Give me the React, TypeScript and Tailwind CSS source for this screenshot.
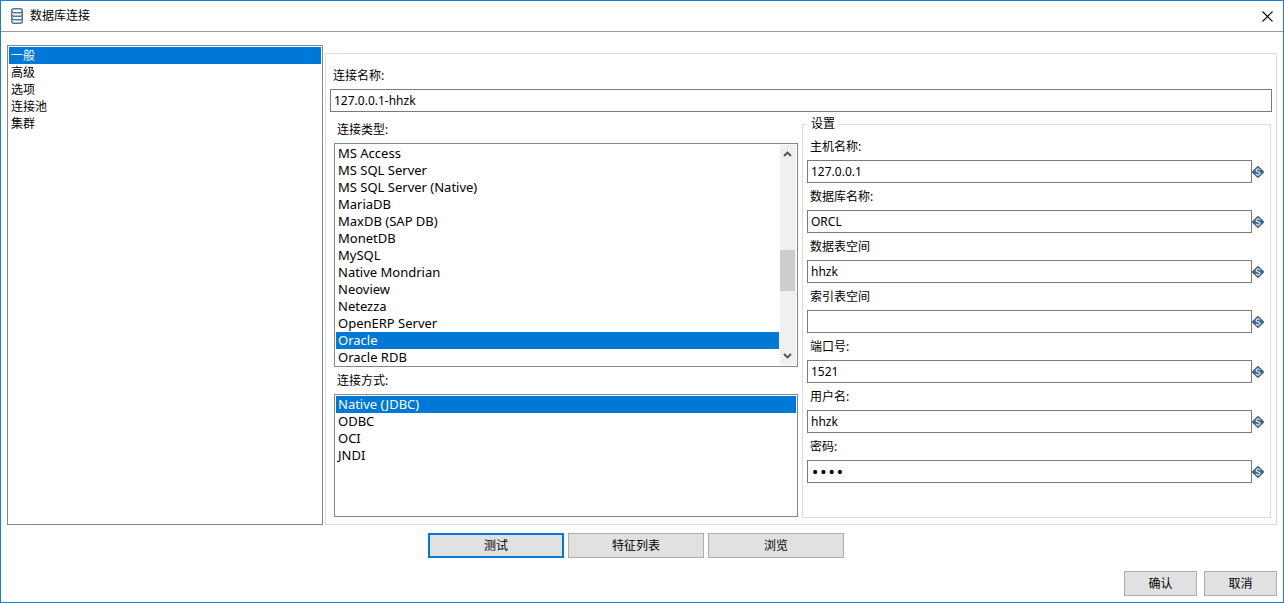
import { FC, ReactNode, useState } from "react";
import clsx from "clsx";

const sections = ["一般", "高级", "选项", "连接池", "集群"];

const connectionTypes = [
  "MS Access",
  "MS SQL Server",
  "MS SQL Server (Native)",
  "MariaDB",
  "MaxDB (SAP DB)",
  "MonetDB",
  "MySQL",
  "Native Mondrian",
  "Neoview",
  "Netezza",
  "OpenERP Server",
  "Oracle",
  "Oracle RDB",
];

const accessMethods = ["Native (JDBC)", "ODBC", "OCI", "JNDI"];

const settings = [
  { id: "host", label: "主机名称:", value: "127.0.0.1" },
  { id: "database", label: "数据库名称:", value: "ORCL" },
  { id: "data-tablespace", label: "数据表空间", value: "hhzk" },
  { id: "index-tablespace", label: "索引表空间", value: "" },
  { id: "port", label: "端口号:", value: "1521" },
  { id: "user", label: "用户名:", value: "hhzk" },
  { id: "password", label: "密码:", value: "hhzk", type: "password" },
];

const DatabaseIcon: FC = () => (
  <svg
    width="12"
    height="16"
    viewBox="0 0 12 16"
    fill="none"
    stroke="#55779a"
    strokeWidth="1.4"
    aria-hidden="true"
  >
    <rect x="0.7" y="0.7" width="10.6" height="4" rx="2" />
    <path d="M0.7 2.700v10.400c0 1.200.9 2.100 2.100 2.100h6.400c1.200 0 2.100-.9 2.100-2.100V2.700" />
    <path d="M0.7 6.200c0 1.200.9 2 2.100 2h6.400c1.200 0 2.100-.8 2.100-2M0.7 9.700c0 1.200.9 2 2.100 2h6.400c1.200 0 2.100-.8 2.100-2" />
  </svg>
);

const VariableIcon: FC = () => (
  <svg width="12" height="12" viewBox="0 0 12 12" className="shrink-0" aria-hidden="true">
    <path
      d="M5.100.4a1.300 1.300 0 0 1 1.800 0l4.700 4.700a1.300 1.300 0 0 1 0 1.800l-4.700 4.700a1.300 1.300 0 0 1-1.800 0L.4 6.900a1.300 1.300 0 0 1 0-1.800z"
      fill="#3f6685"
    />
    <path
      d="M8 4.200C7.600 3.400 6.900 3 6 3c-1.100 0-1.900.6-1.900 1.400C4.100 6.400 8 5.500 8 7.500c0 .9-.9 1.500-2 1.500-.9 0-1.700-.4-2.100-1.200"
      fill="none"
      stroke="#dbe7f0"
      strokeWidth="1.2"
    />
    <path d="M6 1.900v1.200M6 8.900v1.200" stroke="#dbe7f0" strokeWidth="1" />
  </svg>
);

interface ListBoxProps {
  label: string;
  items: string[];
  initial: string;
  className?: string;
  children?: ReactNode;
}

const ListBox: FC<ListBoxProps> = ({ label, items, initial, className, children }) => {
  const [selected, setSelected] = useState(initial);

  return (
    <div className={clsx("flex border border-[#828790] bg-white p-px", className)}>
      <ul role="listbox" aria-label={label} tabIndex={0} className="min-w-0 flex-1 outline-none">
        {items.map((item) => (
          <li
            key={item}
            role="option"
            aria-selected={item === selected}
            onClick={() => setSelected(item)}
            className={clsx(
              "h-[17px] cursor-default truncate px-0.5 leading-[17px]",
              item === selected && "bg-[#0078d7] text-white"
            )}
          >
            {item}
          </li>
        ))}
      </ul>
      {children}
    </div>
  );
};

const ScrollBar: FC = () => (
  <div className="ml-px flex w-4 flex-col items-center bg-[#f0f0f0]" aria-hidden="true">
    <svg width="16" height="17" viewBox="0 0 16 17" fill="none" stroke="#505050" strokeWidth="1.8">
      <path d="M4 11l3.500-3.500L11 11" />
    </svg>
    <div className="flex w-full flex-1 flex-col">
      <div className="flex-[88]" />
      <div className="mr-px flex-[42] bg-[#cdcdcd]" />
      <div className="flex-[57]" />
    </div>
    <svg width="16" height="17" viewBox="0 0 16 17" fill="none" stroke="#505050" strokeWidth="1.8">
      <path d="M4 6l3.500 3.500L11 6" />
    </svg>
  </div>
);

const inputClass =
  "h-[23px] w-full min-w-0 border border-[#7a7a7a] bg-white px-[3px] leading-[17px] outline-none focus:border-[#0078d7]";

const buttonClass = "h-[25px] bg-[#e1e1e1] leading-[17px] hover:bg-[#e5f1fb]";

export default function App() {
  return (
    <div className="flex min-h-screen flex-col border border-[#1a7fd0] bg-white font-['Noto_Sans','Noto_Sans_CJK_SC',sans-serif] text-[12px] text-black">
      {/* Title bar */}
      <header className="flex h-[31px] items-center border-b border-[#999999] px-2.5">
        <DatabaseIcon />
        <h1 className="ml-[7px] flex-1">数据库连接</h1>
        <button type="button" aria-label="关闭">
          <svg width="11" height="11" viewBox="0 0 11 11" stroke="#000" strokeWidth="1.1">
            <path d="M.5.5l10 10M10.500.5l-10 10" />
          </svg>
        </button>
      </header>

      <form
        className="flex flex-1 flex-col px-1.5 pt-[13px] pb-1.5"
        onSubmit={(e) => e.preventDefault()}
      >
        <div className="flex flex-1 gap-0.5">
          <ListBox label="分类" items={sections} initial="一般" className="w-[316px] shrink-0" />

          <div className="mt-2 flex min-w-0 flex-1 flex-col border border-[#dcdcdc] px-1 pt-3">
            <label htmlFor="name" className="mb-[3px] px-[3px] leading-5">
              连接名称:
            </label>
            <input id="name" className={inputClass} defaultValue="127.0.0.1-hhzk" />

            <div className="flex flex-1 gap-1 pt-1.5 pr-px pb-1.5 pl-1">
              {/* Connection type and access */}
              <div className="flex min-w-0 flex-[464] flex-col pt-0.5 pb-px">
                <div className="mb-[3px] px-[3px] leading-5">连接类型:</div>
                <ListBox
                  label="连接类型"
                  items={connectionTypes}
                  initial="Oracle"
                  className="h-[224px] overflow-hidden text-[13px]"
                >
                  <ScrollBar />
                </ListBox>
                <div className="mt-1 mb-[3px] px-[3px] leading-5">连接方式:</div>
                <ListBox
                  label="连接方式"
                  items={accessMethods}
                  initial="Native (JDBC)"
                  className="min-h-[123px] flex-1 text-[13px]"
                />
              </div>

              {/* Settings */}
              <fieldset className="min-w-0 flex-[459] border border-[#dcdcdc] px-1 pt-[7px] pb-[30px]">
                <legend className="h-3 px-1 leading-3">设置</legend>
                {settings.map(({ id, label, value, type = "text" }) => (
                  <div key={id} className="pb-1">
                    <label htmlFor={id} className="mb-[3px] block px-[3px] leading-5">
                      {label}
                    </label>
                    <div className="flex items-center pr-0.5">
                      <input
                        id={id}
                        type={type}
                        className={clsx(
                          inputClass,
                          type === "password" && "font-['DejaVu_Sans',sans-serif] text-[14px]"
                        )}
                        defaultValue={value}
                      />
                      <VariableIcon />
                    </div>
                  </div>
                ))}
              </fieldset>
            </div>
          </div>
        </div>

        <div className="mt-2 flex justify-center gap-1 pr-3">
          <button type="button" className={clsx(buttonClass, "w-[136px] border-2 border-[#0078d7]")}>
            测试
          </button>
          <button type="button" className={clsx(buttonClass, "w-[136px] border border-[#adadad]")}>
            特征列表
          </button>
          <button type="button" className={clsx(buttonClass, "w-[136px] border border-[#adadad]")}>
            浏览
          </button>
        </div>

        <div className="mt-[13px] flex justify-end gap-[7px]">
          <button type="submit" className={clsx(buttonClass, "w-[73px] border border-[#adadad]")}>
            确认
          </button>
          <button type="button" className={clsx(buttonClass, "w-[73px] border border-[#adadad]")}>
            取消
          </button>
        </div>
      </form>
    </div>
  );
}
